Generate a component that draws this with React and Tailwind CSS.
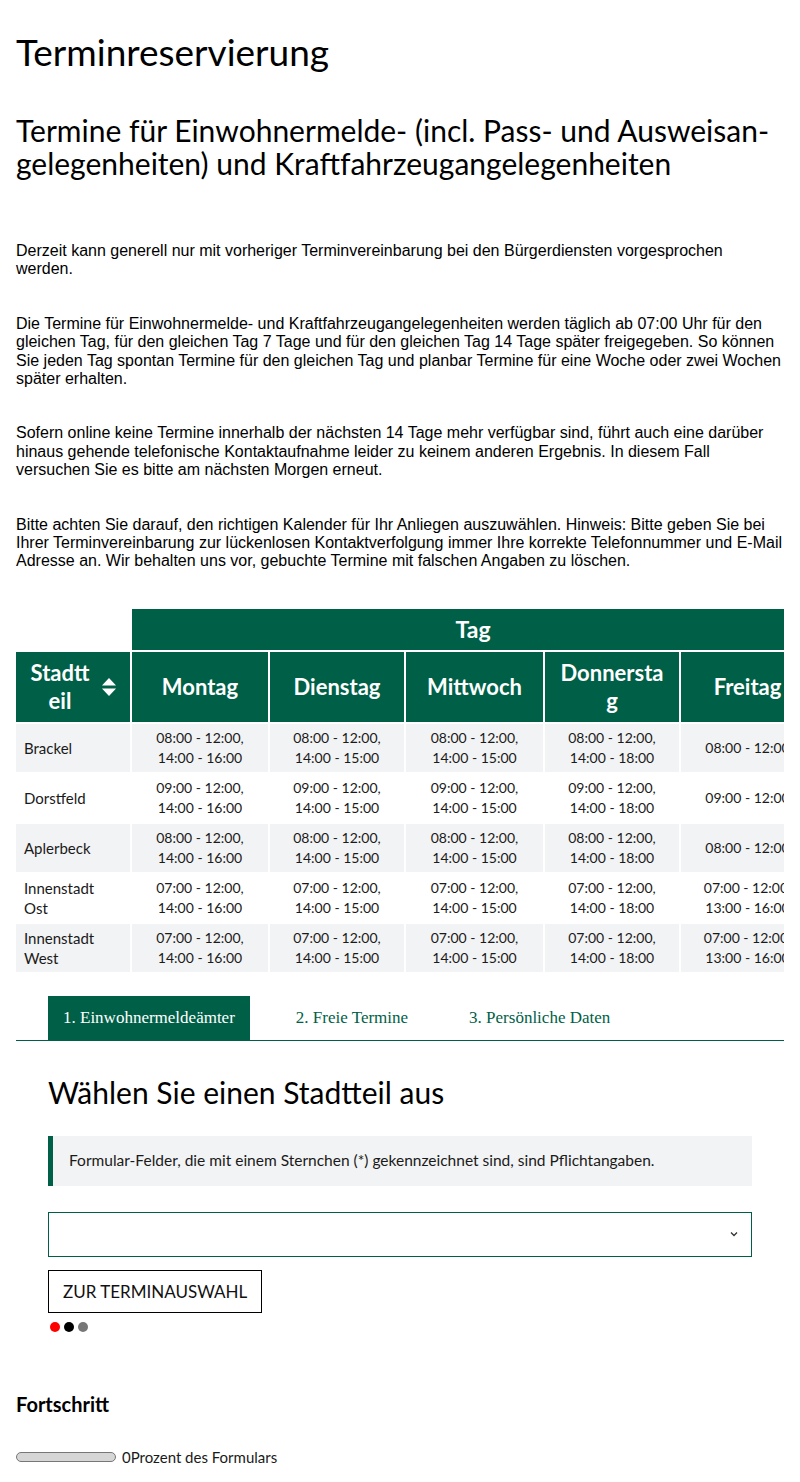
const GREEN = '#005f47';

const rows = [
  {
    name: 'Brackel',
    times: ['08:00 - 12:00,\n14:00 - 16:00', '08:00 - 12:00,\n14:00 - 15:00', '08:00 - 12:00,\n14:00 - 15:00', '08:00 - 12:00,\n14:00 - 18:00', '08:00 - 12:00'],
  },
  {
    name: 'Dorstfeld',
    times: ['09:00 - 12:00,\n14:00 - 16:00', '09:00 - 12:00,\n14:00 - 15:00', '09:00 - 12:00,\n14:00 - 15:00', '09:00 - 12:00,\n14:00 - 18:00', '09:00 - 12:00'],
  },
  {
    name: 'Aplerbeck',
    times: ['08:00 - 12:00,\n14:00 - 16:00', '08:00 - 12:00,\n14:00 - 15:00', '08:00 - 12:00,\n14:00 - 15:00', '08:00 - 12:00,\n14:00 - 18:00', '08:00 - 12:00'],
  },
  {
    name: 'Innenstadt Ost',
    times: ['07:00 - 12:00,\n14:00 - 16:00', '07:00 - 12:00,\n14:00 - 15:00', '07:00 - 12:00,\n14:00 - 15:00', '07:00 - 12:00,\n14:00 - 18:00', '07:00 - 12:00,\n13:00 - 16:00'],
  },
  {
    name: 'Innenstadt West',
    times: ['07:00 - 12:00,\n14:00 - 16:00', '07:00 - 12:00,\n14:00 - 15:00', '07:00 - 12:00,\n14:00 - 15:00', '07:00 - 12:00,\n14:00 - 18:00', '07:00 - 12:00,\n13:00 - 16:00'],
  },
];

const days = ['Montag', 'Dienstag', 'Mittwoch', 'Donnerstag', 'Freitag'];

function SortIcon() {
  return (
    <svg width="16" height="20" viewBox="0 0 16 20" fill="white" aria-hidden="true">
      <path d="M8 1 L15 8.5 H1 Z" />
      <path d="M8 19 L15 11.5 H1 Z" />
    </svg>
  );
}

function Schedule() {
  return (
    <div className="overflow-hidden mt-[36px]">
      <table className="-ml-[2px] border-separate border-spacing-[2px] table-fixed w-[802px] font-['Lato',sans-serif] text-[14px] text-[#1a1a1a]">
        <colgroup>
          <col className="w-[114px]" />
          <col className="w-[136px]" />
          <col className="w-[134px]" />
          <col className="w-[137px]" />
          <col className="w-[134px]" />
          <col className="w-[133px]" />
        </colgroup>
        <thead>
          <tr>
            <td className="h-[41px]"></td>
            <th colSpan={5} className="h-[41px] text-white text-[23px] font-bold" style={{ background: GREEN }}>
              Tag
            </th>
          </tr>
          <tr>
            <th className="h-[70px] text-white text-[22px] font-bold leading-[28px]" style={{ background: GREEN }}>
              <div className="flex items-center pl-[12px] pr-[13px] justify-between">
                <span className="w-[64px] break-all text-center">Stadtteil</span>
                <SortIcon />
              </div>
            </th>
            {days.map((d) => (
              <th key={d} className="h-[70px] px-[15px] text-white text-[22px] font-bold leading-[28px] break-all" style={{ background: GREEN }}>
                {d}
              </th>
            ))}
          </tr>
        </thead>
        <tbody>
          {rows.map((r, i) => (
            <tr key={r.name} className={i % 2 === 0 ? 'bg-[#f2f3f4]' : 'bg-white'}>
              <td className="h-[48px] pl-[8px] pr-[18px] text-[15px] leading-[20px] align-middle">{r.name}</td>
              {r.times.map((t, j) => (
                <td key={j} className="h-[48px] text-center leading-[20px] whitespace-nowrap">
                  {t.split('\n').map((l, k) => (
                    <div key={k}>{l}</div>
                  ))}
                </td>
              ))}
            </tr>
          ))}
        </tbody>
      </table>
    </div>
  );
}

function Tabs() {
  return (
    <div className="mt-[22px] border-b border-[#005f47] pl-[32px] flex items-stretch gap-[31px] font-['Liberation_Serif',serif] text-[17px]">
      <div className="h-[44px] px-[15px] flex items-center text-white" style={{ background: GREEN }}>
        1. Einwohnermeldeämter
      </div>
      <div className="h-[44px] px-[15px] flex items-center text-[#005f47]">2. Freie Termine</div>
      <div className="h-[44px] px-[15px] flex items-center text-[#005f47]">3. Persönliche Daten</div>
    </div>
  );
}

export default function App() {
  return (
    <div className="bg-white text-black px-[16px] pt-[30px] pb-[16px] min-h-[1482px]">
      <h1 className="font-['Lato',sans-serif] text-[37px] leading-[44px]">Terminreservierung</h1>
      <h2 className="mt-[40px] font-['Lato',sans-serif] text-[30px] leading-[33px]">
        Termine für Einwohnermelde- (incl. Pass- und Ausweisan­gelegenheiten) und Kraftfahrzeugangelegenheiten
      </h2>

      <div className="mt-[62px] font-['Liberation_Sans',Arial,sans-serif] text-[16px] leading-[18.4px] flex flex-col gap-[36px]">
        <p>Derzeit kann generell nur mit vorheriger Terminvereinbarung bei den Bürgerdiensten vorgesprochen werden.</p>
        <p>
          Die Termine für Einwohnermelde- und Kraftfahrzeugangelegenheiten werden täglich ab 07:00 Uhr für den gleichen Tag, für den
          gleichen Tag 7 Tage und für den gleichen Tag 14 Tage später freigegeben. So können Sie jeden Tag spontan Termine für den
          gleichen Tag und planbar Termine für eine Woche oder zwei Wochen später erhalten.
        </p>
        <p>
          Sofern online keine Termine innerhalb der nächsten 14 Tage mehr verfügbar sind, führt auch eine darüber hinaus gehende
          telefonische Kontaktaufnahme leider zu keinem anderen Ergebnis. In diesem Fall versuchen Sie es bitte am nächsten Morgen
          erneut.
        </p>
        <p>
          Bitte achten Sie darauf, den richtigen Kalender für Ihr Anliegen auszuwählen. Hinweis: Bitte geben Sie bei Ihrer
          Terminvereinbarung zur lückenlosen Kontaktverfolgung immer Ihre korrekte Telefonnummer und E-Mail Adresse an. Wir behalten
          uns vor, gebuchte Termine mit falschen Angaben zu löschen.
        </p>
      </div>

      <Schedule />
      <Tabs />

      <div className="px-[32px] font-['Lato',sans-serif]">
        <h3 className="mt-[33px] text-[30px] leading-[36px]">Wählen Sie einen Stadtteil aus</h3>

        <div className="mt-[26px] h-[50px] bg-[#f2f3f4] border-l-[5px] border-[#005f47] pl-[16px] flex items-center text-[15.5px] text-[#1a1a1a]">
          Formular-Felder, die mit einem Sternchen (*) gekennzeichnet sind, sind Pflichtangaben.
        </div>

        <div className="mt-[26px] h-[45px] border border-[#005f47] flex items-center justify-end pr-[12px]">
          <svg width="10" height="8" viewBox="0 0 10 8" fill="none" stroke="#333" strokeWidth="1.3">
            <path d="M2 2.5 L5 5.5 L8 2.5" />
          </svg>
        </div>

        <button className="mt-[13px] h-[43px] px-[14px] border border-black bg-white text-[17px] uppercase text-[#111]">
          Zur Terminauswahl
        </button>

        <div className="mt-[9px] flex gap-[4px] pl-[2px]">
          <span className="w-[10px] h-[10px] rounded-full bg-[#ff0000]"></span>
          <span className="w-[10px] h-[10px] rounded-full bg-black"></span>
          <span className="w-[10px] h-[10px] rounded-full bg-[#777]"></span>
        </div>
      </div>

      <div className="font-['Lato',sans-serif]">
        <h4 className="mt-[60px] text-[20px] font-bold leading-[24px]">Fortschritt</h4>
        <div className="mt-[30px] flex items-center gap-[6px] text-[15px] text-[#1a1a1a]">
          <div className="w-[100px] h-[10px] rounded-full border border-[#777] bg-[#d6d6d6]"></div>
          <span>0Prozent des Formulars</span>
        </div>
      </div>
    </div>
  );
}
